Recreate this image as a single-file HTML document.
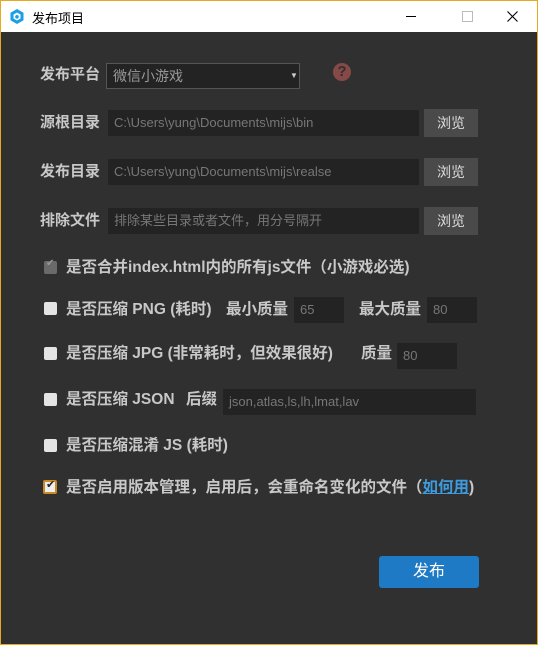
<html><head><style>
body{margin:0;width:538px;height:645px;overflow:hidden;background:#303030;font-family:"Liberation Sans","Noto Sans CJK SC",sans-serif;}
#win{position:absolute;left:0;top:0;width:536px;height:643px;border:1px solid #e8a820;background:#303030;}
#tb{position:absolute;left:0;top:0;width:536px;height:31px;background:#fff;}
.a{position:absolute;}
.lb{position:absolute;color:#c8c8c8;font-size:15px;font-weight:bold;line-height:20px;}
.in{position:absolute;background:#232323;color:#777;font-size:13px;line-height:26px;padding-left:6px;box-sizing:border-box;height:26px;}
.bt{position:absolute;background:#4a4a4a;color:#ddd;font-size:14px;text-align:center;line-height:28px;width:54px;height:28px;}
.cb{position:absolute;left:43px;width:13px;height:13px;background:#e4e4e4;border-radius:2px;}
.ct{position:absolute;left:65px;color:#c8c8c8;font-size:15.5px;font-weight:bold;line-height:20px;white-space:nowrap;}
</style></head><body><div id="win">
<div id="tb">
<svg class="a" style="left:9px;top:8px" width="14" height="15" viewBox="0 0 14 15"><polygon points="7,0 13.5,3.7 13.5,11.3 7,15 0.5,11.3 0.5,3.7" fill="#1a9ee8"/><polygon points="7,3.5 10.5,5.5 10.5,9.5 7,11.5 3.5,9.5 3.5,5.5" fill="#fff"/><circle cx="7" cy="7.8" r="1.8" fill="#1a9ee8"/></svg>
<div class="a" style="left:31px;top:7px;font-size:13px;color:#000;">发布项目</div>
<div class="a" style="left:405px;top:15px;width:10px;height:1px;background:#000"></div>
<div class="a" style="left:461px;top:10px;width:9px;height:9px;border:1px solid #bbb"></div>
<svg class="a" style="left:506px;top:10px" width="11" height="11"><path d="M0.5 0.5L10.5 10.5M10.5 0.5L0.5 10.5" stroke="#000" stroke-width="1.1"/></svg>
</div>
<div class="lb" style="left:39px;top:64px">发布平台</div>
<div class="in" style="left:105px;top:62px;width:194px;height:26px;border:1px solid #555;color:#999;font-size:14px;line-height:24px;">微信小游戏</div>
<div class="a" style="left:289px;top:70px;color:#ccc;font-size:8px">▼</div>
<div class="a" style="left:332px;top:62px;width:18px;height:18px;border-radius:50%;background:#874848;color:#303030;font-weight:bold;font-size:15px;text-align:center;line-height:18px">?</div>
<div class="lb" style="left:39px;top:112px">源根目录</div>
<div class="in" style="left:107px;top:109px;width:311px">C:\Users\yung\Documents\mijs\bin</div>
<div class="bt" style="left:423px;top:108px">浏览</div>
<div class="lb" style="left:39px;top:161px">发布目录</div>
<div class="in" style="left:107px;top:158px;width:311px">C:\Users\yung\Documents\mijs\realse</div>
<div class="bt" style="left:423px;top:157px">浏览</div>
<div class="lb" style="left:39px;top:210px">排除文件</div>
<div class="in" style="left:107px;top:207px;width:311px">排除某些目录或者文件，用分号隔开</div>
<div class="bt" style="left:423px;top:206px">浏览</div>

<div class="cb" style="top:260px;background:#6a6a6a"></div><div class="a" style="left:45px;top:257px;color:#999;font-size:10px">✔</div>
<div class="ct" style="top:257px">是否合并index.html内的所有js文件（小游戏必选)</div>

<div class="cb" style="top:301px"></div>
<div class="ct" style="top:299px">是否压缩 PNG (耗时)</div>
<div class="ct" style="left:225px;top:299px">最小质量</div>
<div class="in" style="left:293px;top:296px;width:50px">65</div>
<div class="ct" style="left:358px;top:299px">最大质量</div>
<div class="in" style="left:426px;top:296px;width:50px">80</div>

<div class="cb" style="top:346px"></div>
<div class="ct" style="top:343px">是否压缩 JPG (非常耗时，但效果很好)</div>
<div class="ct" style="left:360px;top:343px">质量</div>
<div class="in" style="left:396px;top:342px;width:60px">80</div>

<div class="cb" style="top:392px"></div>
<div class="ct" style="top:389px">是否压缩 JSON</div>
<div class="ct" style="left:185px;top:389px">后缀</div>
<div class="in" style="left:222px;top:388px;width:253px">json,atlas,ls,lh,lmat,lav</div>

<div class="cb" style="top:438px"></div>
<div class="ct" style="top:435px">是否压缩混淆 JS (耗时)</div>

<div class="cb" style="top:479px;left:42px;background:#eee;border:2px solid #c88a28;width:10px;height:10px"></div><div class="a" style="left:45px;top:477px;color:#222;font-size:11px">✔</div>
<div class="ct" style="top:477px">是否启用版本管理，启用后，会重命名变化的文件（<span style="color:#3d9be0;text-decoration:underline">如何用</span>)</div>

<div class="a" style="left:378px;top:555px;width:100px;height:32px;background:#1e7ac4;border-radius:3px;color:#fff;font-size:16px;text-align:center;line-height:32px">发布</div>
</div></body></html>
